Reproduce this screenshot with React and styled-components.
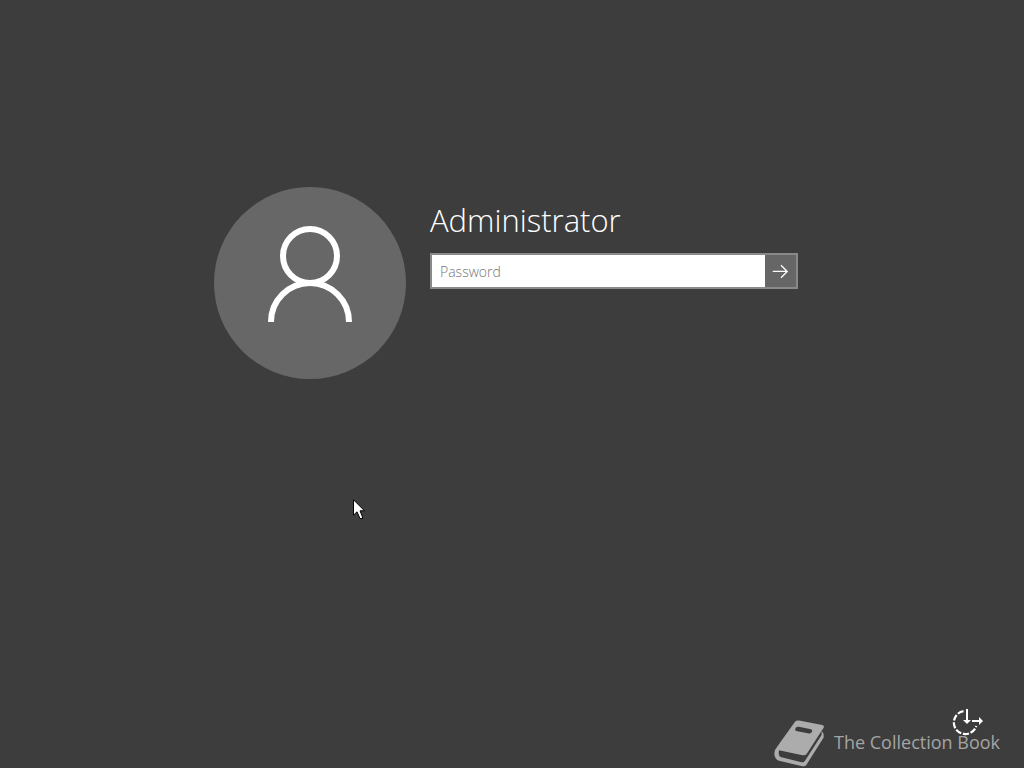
import React, { useState } from 'react';
import styled, { createGlobalStyle } from 'styled-components';

const GlobalStyle = createGlobalStyle`
    *, *::before, *::after {
        box-sizing: border-box;
    }

    body {
        margin: 0;
        background: #3d3d3d;
        font-family: 'Open Sans', 'Noto Sans', sans-serif;
    }
`;

const UserAvatar = () => (
    <Avatar>
        <svg width="192" height="192" viewBox="0 0 192 192" fill="none" stroke="#fff" strokeWidth="6" aria-hidden="true">
            <circle cx="96" cy="69" r="27" />
            <path d="M57 135a39 39 0 0 1 78 0" />
        </svg>
    </Avatar>
);

const SubmitArrow = () => (
    <svg width="32" height="32" viewBox="0 0 32 32" fill="none" stroke="#fff" strokeWidth="1.3" aria-hidden="true">
        <path d="M8 16.5H23M16.5 10L23 16.5L16.5 23" />
    </svg>
);

const BookLogo = () => (
    <svg width="52" height="48" viewBox="0 0 52 48" aria-hidden="true">
        <path
            fill="#acacac"
            d="M21 1.8Q22.5 0 25 0.5L48.3 5Q51 5.8 49.3 8.2L47.5 11L49.5 13.5L49.7 17.5L32.3 45Q30.8 46.8 28.5 46.2L5 40.8Q0 39 0.4 33Q0.7 29.5 3.5 26.3Z"
        />
        <path
            fill="#3d3d3d"
            d="M5 30.2L28.5 35.2Q31.5 35.7 33 33.4L47.6 10.8L47.6 15L31 40.8Q29.8 42.7 27.5 42.2L6.5 37Q4 35.3 5 30.2Z"
        />
        <path
            fill="#3d3d3d"
            d="M21.8 7.7Q23 6.5 24.8 6.8L37 9.3Q39 9.9 38 11.8Q37 13.9 35 13.5L22.2 10.9Q20.4 10.2 21.8 7.7Z"
        />
    </svg>
);

const EaseOfAccess = () => (
    <svg width="32" height="28" viewBox="0 0 32 28" fill="none" stroke="#fff" aria-hidden="true">
        <path strokeWidth="2.2" strokeDasharray="6.2 1.7" d="M11.5 3.2A11.5 11.5 0 1 0 24.3 18" />
        <path strokeWidth="2" d="M15 1V13M20 13H28" />
        <path fill="#fff" stroke="none" d="M11 12H19L15 16ZM27 9L31 13L27 17Z" />
    </svg>
);

const Pointer = () => (
    <PointerIcon width="13" height="21" viewBox="0 0 13 21" aria-hidden="true">
        <path
            fill="#fff"
            stroke="#000"
            d="M0.5 0.8V16.2L4 12.8L7 19.5H9.5V18L7 11.8H11.5Z"
        />
    </PointerIcon>
);

const App = () => {
    const [password, setPassword] = useState('');

    return (
        <Screen>
            <GlobalStyle />
            <Main>
                <UserAvatar />
                <SignIn onSubmit={(e) => e.preventDefault()}>
                    <UserName>Administrator</UserName>
                    <PasswordRow>
                        <PasswordInput
                            type="password"
                            aria-label="Password"
                            placeholder="Password"
                            value={password}
                            onChange={(e) => setPassword(e.target.value)}
                        />
                        <SubmitButton type="submit" aria-label="Submit">
                            <SubmitArrow />
                        </SubmitButton>
                    </PasswordRow>
                </SignIn>
            </Main>
            <Footer>
                <BookLogo />
                <Brand>The Collection Book</Brand>
                <AccessButton type="button" aria-label="Ease of access">
                    <EaseOfAccess />
                </AccessButton>
            </Footer>
            <Pointer />
        </Screen>
    );
};

export default App;

const Screen = styled.div`
    position: relative;
    display: flex;
    flex-direction: column;
    justify-content: space-between;
    min-height: 100vh;
    overflow: hidden;
`;

const Main = styled.main`
    display: flex;
    justify-content: center;
    gap: 24px;
    padding: 187px 24px 24px 12px;
`;

const Avatar = styled.div`
    flex: none;
    width: 192px;
    height: 192px;
    border-radius: 50%;
    background: #676767;
`;

const SignIn = styled.form`
    flex: 0 1 368px;
    min-width: 0;
    padding-top: 9px;
`;

const UserName = styled.h1`
    margin: 0 0 9px;
    color: #fff;
    font-size: 31px;
    font-weight: 300;
    line-height: 48px;
`;

const PasswordRow = styled.div`
    display: flex;
    height: 36px;
    border: 2px solid #898989;
`;

const PasswordInput = styled.input`
    flex: 1;
    min-width: 0;
    padding: 0 8px;
    border: none;
    border-radius: 0;
    outline: none;
    background: #fff;
    color: #000;
    font-family: inherit;
    font-size: 14px;
    font-weight: 300;

    &::placeholder {
        color: #767676;
        opacity: 1;
    }
`;

const SubmitButton = styled.button`
    display: flex;
    flex: none;
    width: 31px;
    padding: 0;
    border: none;
    background: #666;
    cursor: pointer;
`;

const Footer = styled.footer`
    position: relative;
    display: flex;
    align-items: center;
    justify-content: flex-end;
    gap: 8px;
    padding: 0 24px 0 0;
`;

const Brand = styled.span`
    padding-bottom: 4px;
    color: #a4a4a4;
    font-size: 18px;
    line-height: 24px;
`;

const AccessButton = styled.button`
    position: absolute;
    right: 40px;
    bottom: 32px;
    display: flex;
    padding: 0;
    border: none;
    background: none;
    cursor: pointer;
`;

const PointerIcon = styled.svg`
    position: absolute;
    top: 499px;
    left: 353px;
    pointer-events: none;
`;
